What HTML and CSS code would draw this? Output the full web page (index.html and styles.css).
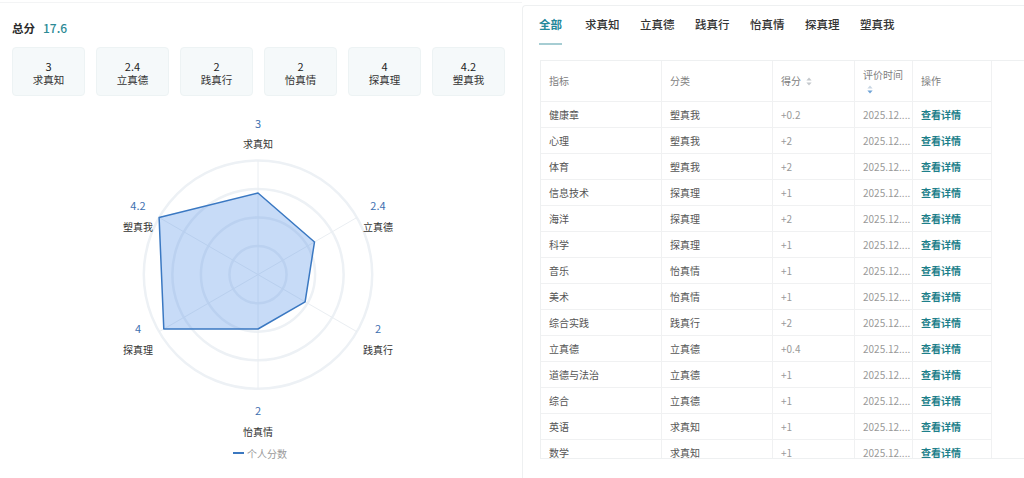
FILE: index.html
```html
<!DOCTYPE html>
<html lang="zh-CN">
<head>
<meta charset="utf-8">
<title>评价</title>
<link rel="stylesheet" href="styles.css">
</head>
<body>
<div class="page">
  <section class="left">
    <div class="total"><span class="total-label">总分</span><span class="total-value">17.6</span></div>
    <div class="cards">
      <div class="card"><div class="card-num">3</div><div class="card-name">求真知</div></div>
      <div class="card"><div class="card-num">2.4</div><div class="card-name">立真德</div></div>
      <div class="card"><div class="card-num">2</div><div class="card-name">践真行</div></div>
      <div class="card"><div class="card-num">2</div><div class="card-name">怡真情</div></div>
      <div class="card"><div class="card-num">4</div><div class="card-name">探真理</div></div>
      <div class="card"><div class="card-num">4.2</div><div class="card-name">塑真我</div></div>
    </div>
    <div class="chart">
      <svg width="522" height="378" viewBox="0 100 522 378" xmlns="http://www.w3.org/2000/svg">
        <g class="rings" fill="none">
          <circle cx="258" cy="274.6" r="114.2"/>
          <circle cx="258" cy="274.6" r="85.65"/>
          <circle cx="258" cy="274.6" r="57.1"/>
          <circle cx="258" cy="274.6" r="28.55"/>
        </g>
        <g class="axes">
          <line x1="258" y1="274.6" x2="258" y2="160.4"/>
          <line x1="258" y1="274.6" x2="356.9" y2="217.5"/>
          <line x1="258" y1="274.6" x2="356.9" y2="331.7"/>
          <line x1="258" y1="274.6" x2="258" y2="388.8"/>
          <line x1="258" y1="274.6" x2="159.1" y2="331.7"/>
          <line x1="258" y1="274.6" x2="159.1" y2="217.5"/>
        </g>
        <polygon class="area" points="258,193 314.5,242 305.1,301.8 258,329 163.8,329 159.1,217.5"/>
        <g class="vals">
          <text x="258" y="123">3</text>
          <text x="378" y="205">2.4</text>
          <text x="378" y="328">2</text>
          <text x="258" y="410">2</text>
          <text x="138" y="328">4</text>
          <text x="138" y="205">4.2</text>
        </g>
        <g class="names">
          <text x="258" y="143">求真知</text>
          <text x="378" y="226">立真德</text>
          <text x="378" y="349">践真行</text>
          <text x="258" y="431">怡真情</text>
          <text x="138" y="349">探真理</text>
          <text x="138" y="226">塑真我</text>
        </g>
        <line class="legend-line" x1="233" y1="453" x2="244" y2="453"/>
        <text class="legend-text" x="247" y="453">个人分数</text>
      </svg>
    </div>
  </section>
  <section class="right">
    <nav class="tabs">
      <span class="tab active">全部</span>
      <span class="tab">求真知</span>
      <span class="tab">立真德</span>
      <span class="tab">践真行</span>
      <span class="tab">怡真情</span>
      <span class="tab">探真理</span>
      <span class="tab">塑真我</span>
    </nav>
    <div class="table-wrap">
      <table class="grid">
        <colgroup>
          <col class="c1"><col class="c2"><col class="c3"><col class="c4"><col class="c5">
        </colgroup>
        <thead>
          <tr>
            <th>指标</th>
            <th>分类</th>
            <th><span class="th-inline">得分<svg class="sort" width="6" height="9" viewBox="0 0 6 9"><path d="M3 0.5 L5.6 3.6 H0.4 Z" fill="#c4c8cc"/><path d="M3 8.5 L5.6 5.4 H0.4 Z" fill="#c4c8cc"/></svg></span></th>
            <th><span class="th-text">评价时间</span><svg class="sort sort-block" width="6" height="9" viewBox="0 0 6 9"><path d="M3 0.5 L5.6 3.6 H0.4 Z" fill="#c9d6e3"/><path d="M3 8.5 L5.6 5.4 H0.4 Z" fill="#6fa3d6"/></svg></th>
            <th>操作</th>
          </tr>
        </thead>
        <tbody>
          <tr><td>健康章</td><td>塑真我</td><td class="num">+0.2</td><td class="num">2025.12....</td><td class="op">查看详情</td></tr>
          <tr><td>心理</td><td>塑真我</td><td class="num">+2</td><td class="num">2025.12....</td><td class="op">查看详情</td></tr>
          <tr><td>体育</td><td>塑真我</td><td class="num">+2</td><td class="num">2025.12....</td><td class="op">查看详情</td></tr>
          <tr><td>信息技术</td><td>探真理</td><td class="num">+1</td><td class="num">2025.12....</td><td class="op">查看详情</td></tr>
          <tr><td>海洋</td><td>探真理</td><td class="num">+2</td><td class="num">2025.12....</td><td class="op">查看详情</td></tr>
          <tr><td>科学</td><td>探真理</td><td class="num">+1</td><td class="num">2025.12....</td><td class="op">查看详情</td></tr>
          <tr><td>音乐</td><td>怡真情</td><td class="num">+1</td><td class="num">2025.12....</td><td class="op">查看详情</td></tr>
          <tr><td>美术</td><td>怡真情</td><td class="num">+1</td><td class="num">2025.12....</td><td class="op">查看详情</td></tr>
          <tr><td>综合实践</td><td>践真行</td><td class="num">+2</td><td class="num">2025.12....</td><td class="op">查看详情</td></tr>
          <tr><td>立真德</td><td>立真德</td><td class="num">+0.4</td><td class="num">2025.12....</td><td class="op">查看详情</td></tr>
          <tr><td>道德与法治</td><td>立真德</td><td class="num">+1</td><td class="num">2025.12....</td><td class="op">查看详情</td></tr>
          <tr><td>综合</td><td>立真德</td><td class="num">+1</td><td class="num">2025.12....</td><td class="op">查看详情</td></tr>
          <tr><td>英语</td><td>求真知</td><td class="num">+1</td><td class="num">2025.12....</td><td class="op">查看详情</td></tr>
          <tr><td>数学</td><td>求真知</td><td class="num">+1</td><td class="num">2025.12....</td><td class="op">查看详情</td></tr>
        </tbody>
      </table>
    </div>
  </section>
</div>
</body>
</html>
```

FILE: styles.css
```css
* { box-sizing: border-box; }

body {
  margin: 0;
  background: #ffffff;
  color: #333333;
  font-family: "Noto Sans CJK SC", "Noto Sans", sans-serif;
}

.page {
  display: flex;
  width: 1024px;
  height: 478px;
  overflow: hidden;
}

/* ---------- left ---------- */
.left {
  width: 522px;
  flex: none;
  margin-top: 2px;
  border-top: 1px solid #f3f4f5;
}

.total {
  display: flex;
  align-items: center;
  gap: 8px;
  padding: 17px 0 0 12px;
  line-height: 16px;
  font-size: 11.5px;
}

.total-label {
  font-weight: 600;
  color: #2b2b2b;
}

.total-value {
  color: #2c8a95;
  font-weight: 500;
  font-size: 12px;
}

.cards {
  display: grid;
  grid-template-columns: repeat(6, 73px);
  column-gap: 11px;
  margin: 11px 0 0 12px;
}

.card {
  height: 49px;
  background: #f5f9fa;
  border: 1px solid #edf3f4;
  border-radius: 4px;
  text-align: center;
  padding-top: 11px;
}

.card-num {
  font-size: 11px;
  line-height: 14px;
  color: #222222;
}

.card-name {
  font-size: 10.5px;
  line-height: 14px;
  color: #333333;
}

.chart {
  margin-top: 4px;
  height: 378px;
}

.chart svg {
  display: block;
  font-family: "Noto Sans CJK SC", "Noto Sans", sans-serif;
}

.rings circle {
  stroke: #edf1f5;
  stroke-width: 2.5;
}

.axes line {
  stroke: #eaeef2;
  stroke-width: 1;
}

.area {
  fill: rgba(84, 145, 230, 0.33);
  stroke: #3a78c2;
  stroke-width: 1.5;
  stroke-linejoin: round;
}

.vals text {
  font-size: 11px;
  fill: #3d6fb0;
  text-anchor: middle;
  dominant-baseline: central;
}

.names text {
  font-size: 10px;
  fill: #333333;
  text-anchor: middle;
  dominant-baseline: central;
}

.legend-line {
  stroke: #3b78c0;
  stroke-width: 2;
}

.legend-text {
  font-size: 10px;
  fill: #9a9a9a;
  dominant-baseline: central;
}

/* ---------- right ---------- */
.right {
  flex: 1;
  margin-top: 5px;
  border-left: 1px solid #eef0f1;
  border-top: 1px solid #eef0f1;
  border-top-left-radius: 4px;
  min-width: 0;
}

.tabs {
  display: flex;
  gap: 20.5px;
  padding: 11px 0 0 16px;
}

.tab {
  font-size: 11.5px;
  line-height: 14px;
  padding-bottom: 12px;
  border-bottom: 2px solid transparent;
  color: #333333;
  font-weight: 500;
  white-space: nowrap;
}

.tab.active {
  color: #23889a;
  font-weight: 600;
  border-bottom-color: #a6cdd3;
  margin-right: 2.5px;
}

.table-wrap {
  margin: 15px 0 0 17px;
  height: 399px;
  border-top: 1px solid #eef0f1;
  border-left: 1px solid #eef0f1;
  border-bottom: 1px solid #eef0f1;
  overflow: hidden;
}

.grid {
  border-collapse: separate;
  border-spacing: 0;
  table-layout: fixed;
  width: 451px;
}

.c1 { width: 121px; }
.c2 { width: 111px; }
.c3 { width: 82px; }
.c4 { width: 58px; }
.c5 { width: 79px; }

.grid th,
.grid td {
  padding: 0 8px;
  text-align: left;
  vertical-align: middle;
  border-right: 1px solid #f0f1f2;
  border-bottom: 1px solid #f0f1f2;
  white-space: nowrap;
  overflow: hidden;
  font-size: 10px;
}

.grid thead tr { height: 41px; }
.grid tbody tr { height: 26px; }

.grid th {
  font-weight: 400;
  color: #808080;
  line-height: 14px;
  white-space: normal;
}

.th-inline {
  display: inline-flex;
  align-items: center;
  gap: 5px;
}

.th-text { display: block; }

.sort { display: inline-block; }

.sort-block {
  display: block;
  margin: 3px 0 0 4px;
}

.grid td {
  color: #555555;
  line-height: 14px;
}

.grid td.num {
  color: #999999;
}

.grid td.op {
  color: #1d7f8a;
  font-weight: 600;
}
```
